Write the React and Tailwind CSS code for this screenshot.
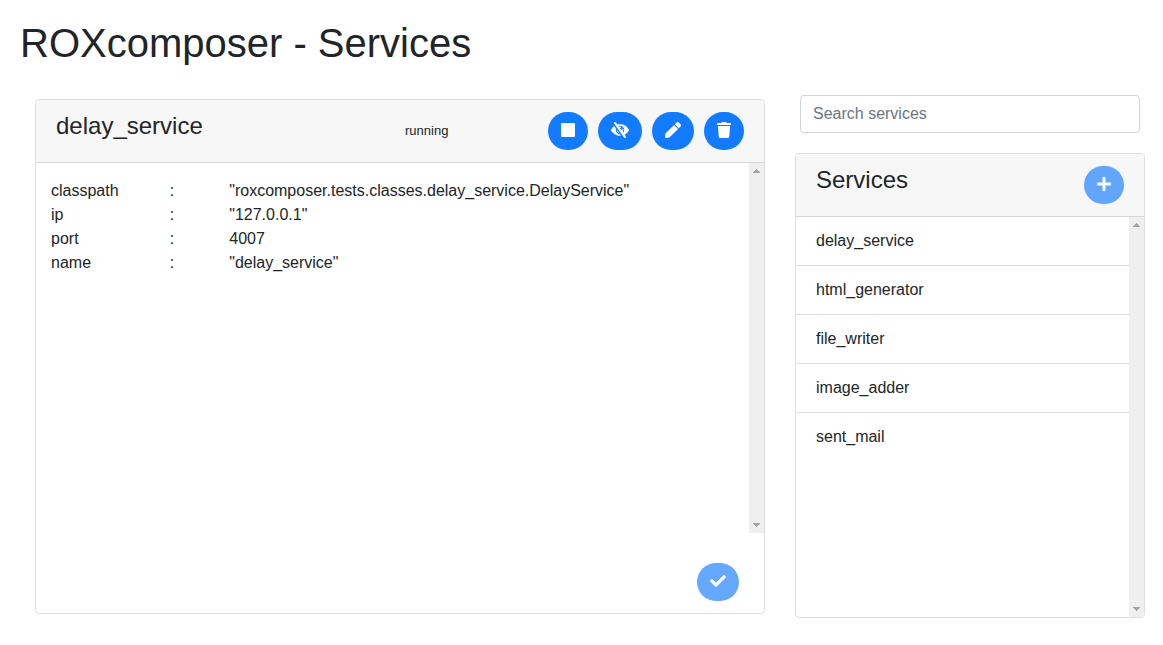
import React from "react";
import { FaCheck, FaPen, FaPlus, FaTrash } from "react-icons/fa";

const properties = [
  ["classpath", '"roxcomposer.tests.classes.delay_service.DelayService"'],
  ["ip", '"127.0.0.1"'],
  ["port", "4007"],
  ["name", '"delay_service"'],
];

const services = ["delay_service", "html_generator", "file_writer", "image_adder", "sent_mail"];

function StopIcon() {
  return (
    <svg viewBox="0 0 14 16" className="h-4 w-3.5" fill="currentColor" aria-hidden="true">
      <rect y="1" width="14" height="14" rx="1" />
    </svg>
  );
}

function EyeSlashIcon() {
  return (
    <svg viewBox="0 0 576 512" className="h-4 w-[18px]" fill="currentColor" aria-hidden="true">
      <path d="M286.693 391.984l32.579 46.542A333.958 333.958 0 0 1 288 440C168.19 440 63.031 376.051 6.646 280.369a47.999 47.999 0 0 1 0-48.739c24.023-40.766 56.913-75.775 96.024-102.537l57.077 81.539C154.736 224.82 152 240.087 152 256c0 74.736 60.135 135.282 134.693 135.984zm282.661-111.615c-31.667 53.737-78.747 97.46-135.175 125.475l.011.015 41.47 59.2c7.6 10.86 4.96 25.82-5.9 33.42l-13.11 9.18c-10.86 7.6-25.82 4.96-33.42-5.9L100.34 46.94c-7.6-10.86-4.96-25.82 5.9-33.42l13.11-9.18c10.86-7.6 25.82-4.96 33.42 5.9l51.038 72.617C230.68 75.776 258.905 72 288 72c119.81 0 224.969 63.949 281.354 159.631a48.002 48.002 0 0 1 0 48.738zM424 256c0-75.174-60.838-136-136-136-17.939 0-35.056 3.473-50.729 9.772l19.299 27.058c25.869-8.171 55.044-6.163 80.4 7.41h-.03c-23.65 0-42.82 19.17-42.82 42.82 0 23.626 19.147 42.82 42.82 42.82 23.65 0 42.82-19.17 42.82-42.82v-.03c18.462 34.49 16.312 77.914-8.25 110.95v.01l19.314 27.061C411.496 321.2 424 290.074 424 256zM262.014 356.727l-77.53-110.757c-5.014 52.387 29.314 98.354 77.53 110.757z" />
    </svg>
  );
}

function RoundButton({ label, disabled, children }) {
  return (
    <button
      type="button"
      aria-label={label}
      disabled={disabled}
      className="flex h-[38px] items-center rounded-full bg-[#127bff] px-[13px] pb-0.5 text-white disabled:opacity-65"
    >
      {children}
    </button>
  );
}

function ScrollTrack() {
  return (
    <div className="flex w-[15px] shrink-0 flex-col items-center justify-between bg-[#efefef] py-1.5 text-[#a3a3a3]" aria-hidden="true">
      <svg viewBox="0 0 7 4" className="h-1 w-[7px]" fill="currentColor" shapeRendering="crispEdges">
        <path d="M3 0h1v1h1v1h1v1h1v1H0V3h1V2h1V1h1z" />
      </svg>
      <svg viewBox="0 0 7 4" className="h-1 w-[7px]" fill="currentColor" shapeRendering="crispEdges">
        <path d="M0 0h7v1H6v1H5v1H4v1H3V3H2V2H1V1H0z" />
      </svg>
    </div>
  );
}

function Card({ children }) {
  return (
    <section className="overflow-hidden rounded-[4px] border border-[#dfdfdf] bg-white">
      {children}
    </section>
  );
}

function CardHeader({ children }) {
  return (
    <header className="flex items-start border-b border-[#d8d8d8] bg-[#f7f7f7] px-5 py-3">{children}</header>
  );
}

export default function App() {
  return (
    <main className="min-h-screen bg-white pt-[19px] pr-[3px] pl-5 font-['Liberation_Sans',Arial,sans-serif] text-base text-[#212529]">
      <h1 className="text-[40px] leading-[48px]">ROXcomposer - Services</h1>
      <div className="grid grid-cols-3 items-start pt-7">
        <div className="col-span-2 px-[15px] pt-1">
          <Card>
            <CardHeader>
              <h2 className="w-1/2 text-2xl leading-[28px]">delay_service</h2>
              <div className="flex grow items-center justify-between pl-[5px]">
                <span className="text-[13px] leading-5">running</span>
                <div className="flex gap-2.5">
                  <RoundButton label="Stop service"><StopIcon /></RoundButton>
                  <RoundButton label="Unwatch service"><EyeSlashIcon /></RoundButton>
                  <RoundButton label="Edit service"><FaPen className="size-4" /></RoundButton>
                  <RoundButton label="Delete service"><FaTrash className="h-4 w-3.5" /></RoundButton>
                </div>
              </div>
            </CardHeader>
            <div className="flex h-[370px]">
              <div className="grow pt-4">
                <table className="w-full table-fixed text-left">
                  <tbody>
                    {properties.map(([key, value]) => (
                      <tr key={key}>
                        <th scope="row" className="w-1/6 pl-[15px] font-normal">{key}</th>
                        <td className="w-1/12 pl-[15px]">:</td>
                        <td className="pl-[15px]">{value}</td>
                      </tr>
                    ))}
                  </tbody>
                </table>
              </div>
              <ScrollTrack />
            </div>
            <div className="flex justify-end pt-[30px] pr-[25px] pb-3">
              <RoundButton label="Save changes" disabled><FaCheck className="size-4" /></RoundButton>
            </div>
          </Card>
        </div>
        <div className="px-[15px]">
          <div className="px-[5px] pb-5">
            <input
              type="search"
              aria-label="Search services"
              placeholder="Search services"
              className="block h-[38px] w-full rounded-[4px] border border-[#ced4da] px-3 placeholder:text-[#6c757d]"
            />
          </div>
          <Card>
            <CardHeader>
              <h2 className="grow text-2xl leading-[28px]">Services</h2>
              <RoundButton label="Add service" disabled><FaPlus className="h-4 w-3.5" /></RoundButton>
            </CardHeader>
            <div className="flex h-[400px]">
              <ul className="grow divide-y divide-[#dfdfdf]">
                {services.map((name) => (
                  <li key={name}>
                    <a href={"#" + name} className="block px-5 py-3">{name}</a>
                  </li>
                ))}
              </ul>
              <ScrollTrack />
            </div>
          </Card>
        </div>
      </div>
    </main>
  );
}
